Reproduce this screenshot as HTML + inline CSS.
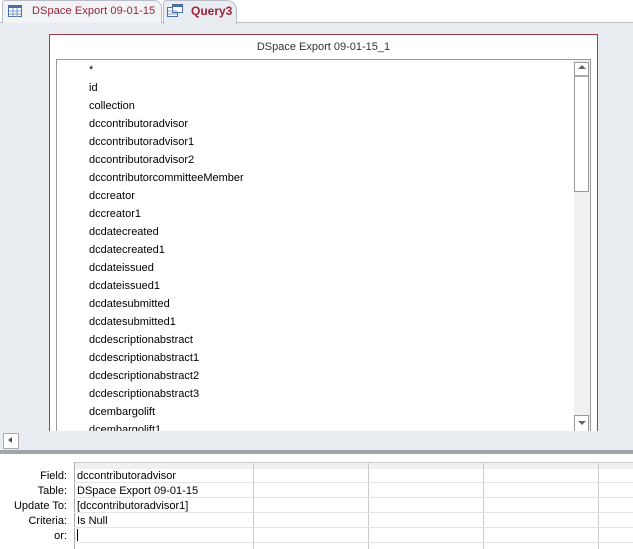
<!DOCTYPE html><html><head><style>
body{margin:0;width:633px;height:549px;overflow:hidden;background:#fff;font-family:"Liberation Sans",sans-serif;font-size:11px;color:#000;position:relative}
.a{position:absolute}
</style></head><body>
<div class="a" style="left:0;top:0;width:633px;height:22px;background:#fff"></div>
<div class="a" style="left:0;top:22px;width:633px;height:409px;background:#e9ecf1;border-top:1px solid #b9bdc4"></div>
<div class="a" style="left:2px;top:0;width:158px;height:22px;background:#f1f3f6;border:1px solid #b9bdc4;border-bottom:none;border-radius:3px 8px 0 0"></div>
<svg class="a" style="left:8px;top:5px" width="14" height="12"><rect x="0.5" y="0.5" width="13" height="11" fill="#fff" stroke="#4a6fa8"/><rect x="1" y="1" width="12" height="2" fill="#4a6fa8"/><path d="M1 6H13M1 9H13M5 3V12M9 3V12" stroke="#7a9bd0"/></svg>
<div class="a" style="left:32px;top:5px;color:#9b2335;font-size:11px;letter-spacing:0.1px">DSpace Export 09-01-15</div>
<div class="a" style="left:163px;top:0;width:72px;height:23px;background:#e9ecf1;border:1px solid #b9bdc4;border-bottom:none;border-radius:3px 10px 0 0"></div>
<svg class="a" style="left:167px;top:4px" width="16" height="14"><rect x="0.5" y="3.5" width="10" height="9" fill="#fff" stroke="#4a6fa8"/><rect x="5.5" y="0.5" width="10" height="8" fill="#fff" stroke="#4a6fa8"/><rect x="6" y="1" width="9" height="2" fill="#4a6fa8"/><path d="M1 7H10M1 10H10" stroke="#7a9bd0"/></svg>
<div class="a" style="left:191px;top:4px;color:#9b2335;font-size:12px;font-weight:bold">Query3</div>
<div class="a" style="left:49px;top:34px;width:547px;height:400px;background:#fff;border:1px solid #a33a48;border-bottom:none"></div>
<div class="a" style="left:49px;top:41px;width:549px;text-align:center;color:#333">DSpace Export 09-01-15_1</div>
<div class="a" style="left:56px;top:59px;width:533px;height:375px;border:1px solid #999;border-bottom:none;overflow:hidden">
<div style="position:absolute;left:32px;top:1px;line-height:18px;font-size:11px">*<br>id<br>collection<br>dccontributoradvisor<br>dccontributoradvisor1<br>dccontributoradvisor2<br>dccontributorcommitteeMember<br>dccreator<br>dccreator1<br>dcdatecreated<br>dcdatecreated1<br>dcdateissued<br>dcdateissued1<br>dcdatesubmitted<br>dcdatesubmitted1<br>dcdescriptionabstract<br>dcdescriptionabstract1<br>dcdescriptionabstract2<br>dcdescriptionabstract3<br>dcembargolift<br>dcembargolift1</div>
<div style="position:absolute;left:517px;top:0;width:16px;height:375px;background:#f0f0f0"></div>
<div style="position:absolute;left:517px;top:2px;width:13px;height:128px;border:1px solid #999;background:#fff"></div>
<div style="position:absolute;left:521px;top:5px;border:4px solid transparent;border-bottom:4px solid #666;border-top:none"></div>
<div style="position:absolute;left:518px;top:15px;width:13px;height:2px;background:#aaa"></div>
<div style="position:absolute;left:517px;top:355px;width:13px;height:16px;border:1px solid #999;background:#fff"></div>
<div style="position:absolute;left:521px;top:361px;border:4px solid transparent;border-top:4px solid #666;border-bottom:none"></div>
</div>
<div class="a" style="left:0;top:431px;width:633px;height:19px;background:#e9ecf1"></div>
<div class="a" style="left:3px;top:433px;width:14px;height:14px;border:1px solid #aaa;background:#fff"></div>
<div class="a" style="left:8px;top:437px;border:3px solid transparent;border-right:4px solid #555;border-left:none"></div>
<div class="a" style="left:0;top:450px;width:633px;height:4px;background:#9fa4ad"></div>
<div class="a" style="left:74px;top:462px;width:560px;height:6px;background:#f0f0f0;border-top:1px solid #ccc"></div>
<div class="a" style="left:74px;top:462px;width:1px;height:87px;background:#aaa"></div>
<div class="a" style="left:253px;top:462px;width:1px;height:87px;background:#ccc"></div>
<div class="a" style="left:368px;top:462px;width:1px;height:87px;background:#ccc"></div>
<div class="a" style="left:483px;top:462px;width:1px;height:87px;background:#ccc"></div>
<div class="a" style="left:598px;top:462px;width:1px;height:87px;background:#ccc"></div>
<div class="a" style="left:74px;top:482px;width:560px;height:1px;background:#e4e4e4"></div>
<div class="a" style="left:74px;top:497px;width:560px;height:1px;background:#e4e4e4"></div>
<div class="a" style="left:74px;top:512px;width:560px;height:1px;background:#e4e4e4"></div>
<div class="a" style="left:74px;top:527px;width:560px;height:1px;background:#e4e4e4"></div>
<div class="a" style="left:74px;top:542px;width:560px;height:1px;background:#e4e4e4"></div>
<div class="a" style="left:0;top:469px;width:67px;text-align:right;line-height:15px">Field:<br>Table:<br>Update To:<br>Criteria:<br>or:</div>
<div class="a" style="left:77px;top:469px;line-height:15px">dccontributoradvisor<br>DSpace Export 09-01-15<br>[dccontributoradvisor1]<br>Is Null</div>
<div class="a" style="left:77px;top:529px;width:1px;height:12px;background:#000"></div>
</body></html>
